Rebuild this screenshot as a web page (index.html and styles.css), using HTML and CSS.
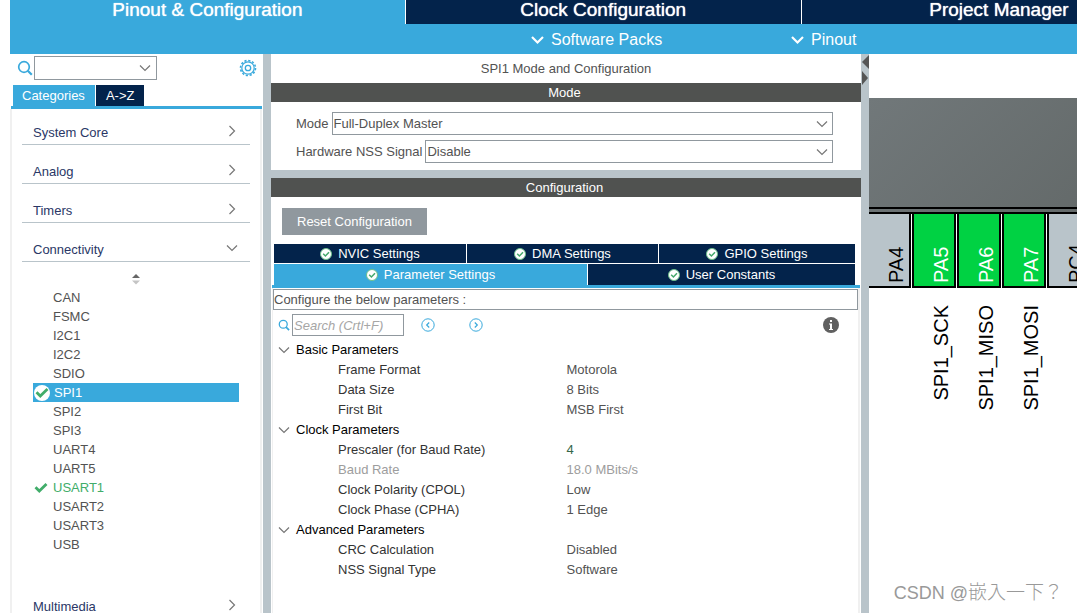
FILE: index.html
```html
<!DOCTYPE html>
<html lang="en">
<head>
<meta charset="utf-8">
<title>Pinout &amp; Configuration</title>
<link rel="stylesheet" href="styles.css">
</head>
<body>
<svg class="defs" aria-hidden="true">
  <symbol id="down" viewBox="0 0 12 12"><path d="M1 3.500L6 8.500L11 3.500" fill="none" stroke="currentColor" stroke-width="1.200"/></symbol>
  <symbol id="right" viewBox="0 0 12 12"><path d="M3.500 1L8.500 6L3.500 11" fill="none" stroke="currentColor" stroke-width="1.200"/></symbol>
  <symbol id="bold-down" viewBox="0 0 14 14"><path d="M2 4L7.500 9.500L13 4" fill="none" stroke="currentColor" stroke-width="2.200"/></symbol>
  <symbol id="search" viewBox="0 0 16 16"><circle cx="7" cy="7" r="5.300" fill="none" stroke="currentColor" stroke-width="1.700"/><path d="M10.800 10.800L14.800 14.800" stroke="currentColor" stroke-width="2.200"/></symbol>
  <symbol id="ok" viewBox="0 0 12 12"><circle cx="6" cy="6" r="5.500" fill="#fff" stroke="#6cbf8b"/><path d="M3.200 5.800L5.400 8L9 4.200" fill="none" stroke="#45a96c" stroke-width="1.500"/></symbol>
  <symbol id="tick" viewBox="0 0 16 16"><path d="M2.500 7.300L6.300 11L13.500 4" fill="none" stroke="#41ad6a" stroke-width="2.800"/></symbol>
</svg>
<div class="app">
  <header>
    <nav class="main-tabs">
      <button class="main-tab active">Pinout &amp; Configuration</button>
      <button class="main-tab">Clock Configuration</button>
      <button class="main-tab">Project Manager</button>
    </nav>
    <div class="menu-bar">
      <button class="menu packs"><svg><use href="#bold-down"/></svg>Software Packs</button>
      <button class="menu"><svg><use href="#bold-down"/></svg>Pinout</button>
    </div>
  </header>
  <main>
    <aside class="sidebar">
      <div class="find">
        <svg class="icon16 blue"><use href="#search"/></svg>
        <div class="combo find-combo"><select aria-label="Find peripheral"><option></option></select><svg><use href="#down"/></svg></div>
        <button class="gear" aria-label="Settings"><svg viewBox="0 0 18 18" fill="none" stroke="currentColor"><circle cx="9" cy="9" r="2.700" stroke-width="1.300"/><circle cx="9" cy="9" r="6.200" stroke-width="1.200"/><circle cx="9" cy="9" r="7.500" stroke-width="1.600" stroke-dasharray="2.200 1.727"/></svg></button>
      </div>
      <div class="side-tabs"><button class="side-tab active">Categories</button><button class="side-tab">A-&gt;Z</button></div>
      <div class="categories">
        <button class="category">System Core<svg><use href="#right"/></svg></button>
        <button class="category">Analog<svg><use href="#right"/></svg></button>
        <button class="category">Timers<svg><use href="#right"/></svg></button>
        <button class="category">Connectivity<svg><use href="#down"/></svg></button>
        <div class="group">
          <svg class="sort" viewBox="0 0 10 12"><path d="M5 1L9 5H1z" fill="#666"/><path d="M1 7.500H9L5 11.500z" fill="#c4c4c4"/></svg>
          <ul>
            <li>CAN</li><li>FSMC</li><li>I2C1</li><li>I2C2</li><li>SDIO</li>
            <li class="selected"><svg viewBox="0 0 16 16"><circle cx="8" cy="8" r="8" fill="#fff"/><use href="#tick"/></svg>SPI1</li>
            <li>SPI2</li><li>SPI3</li><li>UART4</li><li>UART5</li>
            <li class="enabled"><svg><use href="#tick"/></svg>USART1</li>
            <li>USART2</li><li>USART3</li><li>USB</li>
          </ul>
        </div>
        <button class="category">Multimedia<svg><use href="#right"/></svg></button>
      </div>
    </aside>
    <div class="divider"></div>
    <section class="settings">
      <h1>SPI1 Mode and Configuration</h1>
      <h2>Mode</h2>
      <div class="mode-form">
        <div class="field"><label for="mode">Mode</label><div class="combo"><select id="mode"><option>Full-Duplex Master</option></select><svg><use href="#down"/></svg></div></div>
        <div class="field"><label for="nss">Hardware NSS Signal</label><div class="combo"><select id="nss"><option>Disable</option></select><svg><use href="#down"/></svg></div></div>
      </div>
      <div class="split"></div>
      <h2>Configuration</h2>
      <div class="configuration">
        <button class="reset">Reset Configuration</button>
        <div class="tabs">
          <div class="tab-row top"><button><svg><use href="#ok"/></svg>NVIC Settings</button><button><svg><use href="#ok"/></svg>DMA Settings</button><button><svg><use href="#ok"/></svg>GPIO Settings</button></div>
          <div class="tab-row bottom"><button class="active"><svg><use href="#ok"/></svg>Parameter Settings</button><button><svg><use href="#ok"/></svg>User Constants</button></div>
        </div>
        <div class="parameters">
          <p class="hint">Configure the below parameters :</p>
          <div class="toolbar">
            <svg class="icon12 blue"><use href="#search"/></svg>
            <input type="text" placeholder="Search (Crtl+F)" aria-label="Search parameters">
            <button class="step" aria-label="Previous"><svg viewBox="0 0 14 14" fill="none" stroke="currentColor"><circle cx="7" cy="7" r="6.200"/><path d="M8.200 4.500L5.700 7L8.200 9.500" stroke-width="1.200"/></svg></button>
            <button class="step" aria-label="Next"><svg viewBox="0 0 14 14" fill="none" stroke="currentColor"><circle cx="7" cy="7" r="6.200"/><path d="M5.800 4.500L8.300 7L5.800 9.500" stroke-width="1.200"/></svg></button>
            <button class="info" aria-label="Information"><svg viewBox="0 0 16 16"><circle cx="8" cy="8" r="8" fill="#606060"/><path d="M7 3H9V5H7zM6 6.500H9V12H10V13H6V12H7V7.500H6z" fill="#fff"/></svg></button>
          </div>
          <table>
            <tbody>
            <tr class="section"><th colspan="2"><svg><use href="#down"/></svg>Basic Parameters</th></tr>
            <tr><th>Frame Format</th><td>Motorola</td></tr>
            <tr><th>Data Size</th><td>8 Bits</td></tr>
            <tr><th>First Bit</th><td>MSB First</td></tr>
            <tr class="section"><th colspan="2"><svg><use href="#down"/></svg>Clock Parameters</th></tr>
            <tr><th>Prescaler (for Baud Rate)</th><td class="good">4</td></tr>
            <tr class="readonly"><th>Baud Rate</th><td>18.0 MBits/s</td></tr>
            <tr><th>Clock Polarity (CPOL)</th><td>Low</td></tr>
            <tr><th>Clock Phase (CPHA)</th><td>1 Edge</td></tr>
            <tr class="section"><th colspan="2"><svg><use href="#down"/></svg>Advanced Parameters</th></tr>
            <tr><th>CRC Calculation</th><td>Disabled</td></tr>
            <tr><th>NSS Signal Type</th><td>Software</td></tr>
            </tbody>
          </table>
        </div>
      </div>
    </section>
    <div class="divider arrows"><svg viewBox="0 0 8 32"><path d="M8 1V15L1 8z" fill="#555"/><path d="M1 17V31L7 24z" fill="#555"/></svg></div>
    <section class="pinout">
      <div class="chip"></div>
      <div class="pins">
        <div class="pin"><span class="name">PA4</span></div>
        <div class="pin used"><span class="name">PA5</span><span class="signal">SPI1_SCK</span></div>
        <div class="pin used"><span class="name">PA6</span><span class="signal">SPI1_MISO</span></div>
        <div class="pin used"><span class="name">PA7</span><span class="signal">SPI1_MOSI</span></div>
        <div class="pin"><span class="name">PC4</span></div>
      </div>
      <p class="watermark">CSDN @<span lang="zh-TW">嵌入一下？</span></p>
    </section>
  </main>
</div>
</body>
</html>
```
FILE: styles.css
```css
* { box-sizing: border-box; }

:root {
  --blue: #39a9dc;
  --navy: #03234b;
  --steel: #b9c4ca;
  --outline: #90989e;
  --text: #525252;
}

body {
  margin: 0;
  background: #fff;
  color: var(--text);
  font: 13px/16px "Liberation Sans", Arial, sans-serif;
}

button, input, select { font: inherit; color: inherit; border: 0; margin: 0; padding: 0; border-radius: 0; background: none; }
h1, h2, p, ul { margin: 0; padding: 0; font-size: inherit; font-weight: normal; }
svg { flex: none; display: block; }
.defs { display: none; }

.app {
  display: flex;
  flex-direction: column;
  height: 100vh;
  padding-left: 10px;
  overflow: hidden;
}

/* Header */
.main-tabs { display: flex; gap: 1px; height: 24px; overflow: hidden; }
.main-tab {
  flex: 0 0 37%;
  padding-bottom: 5px;
  background: var(--navy);
  color: #fff;
  font-size: 19px;
  line-height: 19px;
  text-shadow: 0 0 1px #fff;
}
.main-tab.active { background: var(--blue); }
.menu-bar {
  display: grid;
  grid-template-columns: 520fr 260fr 287fr;
  height: 30px;
  background: var(--blue);
}
.menu { display: flex; align-items: center; gap: 7px; padding-top: 1px; color: #fff; font-size: 16px; }
.menu svg { width: 14px; height: 14px; }
.packs { grid-column: 2; }

main {
  flex: 1;
  min-height: 0;
  display: grid;
  grid-template-columns: 253px 8px minmax(0, 590fr) 8px minmax(0, 208fr);
}
.divider, .split { background: var(--steel); }
.arrows svg { width: 8px; height: 32px; }

/* Drop-downs */
.combo { display: grid; align-items: center; flex: 1; height: 23px; }
.combo > * { grid-area: 1 / 1; }
.combo select {
  appearance: none;
  width: 100%;
  height: 100%;
  padding-left: 1px;
  border: 1px solid var(--outline);
  background: #fff;
}
.combo svg { justify-self: end; width: 12px; height: 12px; margin-right: 5px; color: #777; pointer-events: none; }

/* Sidebar */
.blue { color: var(--blue); }
.icon16 { width: 16px; height: 16px; }
.icon12 { width: 12px; height: 12px; }
.sidebar { display: flex; flex-direction: column; min-height: 0; padding-right: 1px; }
.find { display: flex; align-items: center; gap: 1px; padding: 2px 5px 5px 7px; }
.find-combo { flex: 0 0 123px; height: 24px; }
.find-combo svg { margin-right: 6px; }
.gear { margin-left: auto; color: var(--blue); }
.gear svg { width: 18px; height: 18px; }
.side-tabs { display: flex; gap: 1px; margin-left: 1px; padding-left: 2px; border-bottom: 3px solid var(--blue); }
.side-tab { height: 21px; padding: 0 10px; background: var(--navy); color: #fff; }
.side-tab.active { padding: 0 10px 0 9px; background: var(--blue); }
.categories {
  flex: 1;
  display: flex;
  flex-direction: column;
  gap: 3px;
  padding: 0 10px;
  border: solid #f0f0f0;
  border-width: 0 2px;
}
.category {
  flex: none;
  display: flex;
  justify-content: space-between;
  height: 36px;
  padding: 16px 12px 3px 11px;
  border-bottom: 1px solid var(--steel);
  color: #2a3766;
}
.category svg { width: 12px; height: 12px; color: #777; }
.group { padding: 8px 11px 26px; }
.sort { width: 10px; height: 12px; margin: 0 auto 3px; }
.group ul { list-style: none; }
.group li { display: flex; align-items: center; height: 19px; padding-left: 20px; }
.group .selected, .group .enabled { gap: 4px; padding-left: 0; }
.group .selected { padding-left: 1px; background: var(--blue); color: #fff; }
.group .enabled { color: #41ad6a; }
.group li svg { width: 16px; height: 16px; }

/* Settings */
.settings { display: flex; flex-direction: column; min-height: 0; }
h1 { padding: 7px 0 6px; text-align: center; }
h2 { height: 19px; padding-right: 3px; line-height: 19px; background: #505250; color: #fff; text-align: center; }
.mode-form { display: flex; flex-direction: column; gap: 5px; padding: 10px 28px 7px 25px; }
.field { display: flex; align-items: center; gap: 3px; }
.split { height: 8px; }
.configuration { flex: 1; display: flex; flex-direction: column; padding: 11px 1px 0; }
.reset { align-self: flex-start; height: 27px; margin: 0 0 9px 10px; padding: 0 15px; background: var(--outline); color: #fff; }
.tabs { display: grid; gap: 1px; padding: 0 5px 0 2px; border-bottom: 3px solid var(--blue); }
.tab-row { display: grid; gap: 1px; }
.tab-row.top { grid-template-columns: 192fr 191fr 196fr; height: 19px; }
.tab-row.bottom { grid-template-columns: 313fr 267fr; height: 21px; }
.tab-row button { display: flex; align-items: center; justify-content: center; gap: 6px; padding-top: 1px; background: var(--navy); color: #fff; }
.tab-row button.active { background: var(--blue); }
.tab-row svg { width: 12px; height: 12px; }
.parameters { flex: 1; padding-top: 1px; border: solid #f0f0f0; border-width: 0 2px 0 1px; }
.hint { height: 21px; line-height: 20px; border: 1px solid var(--outline); }
.toolbar { display: flex; align-items: center; padding: 4px 19px 4px 5px; }
.toolbar input { width: 112px; height: 22px; margin: 0 17px 0 2px; padding: 0 1px; border: 1px solid var(--outline); background: #fff; }
.toolbar input::placeholder { color: #a6a6a6; font-style: italic; opacity: 1; }
.step { margin-right: 34px; color: var(--blue); }
.step svg { width: 14px; height: 14px; }
.info { margin-left: auto; }
.info svg { width: 16px; height: 16px; }

table { width: 100%; border-collapse: collapse; table-layout: fixed; }
th, td { height: 20px; padding: 0; font-weight: normal; text-align: left; }
td { padding-left: 1px; }
tr:not(.section) th { padding-left: 65px; color: #333; }
.section th { display: flex; align-items: center; gap: 6px; padding-left: 5px; color: #000; }
.section svg { width: 12px; height: 12px; color: #777; }
.readonly td, tr.readonly:not(.section) th { color: #9d9d9d; }
.good { color: #34664a; }

/* Chip view */
.pinout { position: relative; min-width: 0; padding-top: 44px; overflow: hidden; }
.chip {
  height: 114px;
  background:
    linear-gradient(#000, #000) 0 109px / 100% 2px no-repeat,
    linear-gradient(135deg, #71787a, #646a6a);
}
.pins { display: flex; gap: 1px; margin-left: -2px; border-top: 2px solid #000; color: #000; font-size: 20px; line-height: 20px; }
.pin { flex: 0 0 44px; }
.name, .signal {
  display: flex;
  flex-direction: column;
  justify-content: flex-end;
  width: 44px;
  writing-mode: vertical-rl;
  transform: rotate(180deg);
}
.name { height: 74px; padding: 3px 0 0 3px; border: 2px solid #000; border-bottom: 0; background: var(--steel); }
.signal { margin-top: 17px; padding-left: 5px; }
.used .name { background: #00d243; color: #fff; }
.watermark {
  position: absolute;
  right: 14px;
  bottom: 8px;
  color: #999;
  font-size: 18px;
  line-height: 24px;
  white-space: nowrap;
}
.watermark span { font: 300 19px/24px "Noto Sans CJK TC", sans-serif; }
```
